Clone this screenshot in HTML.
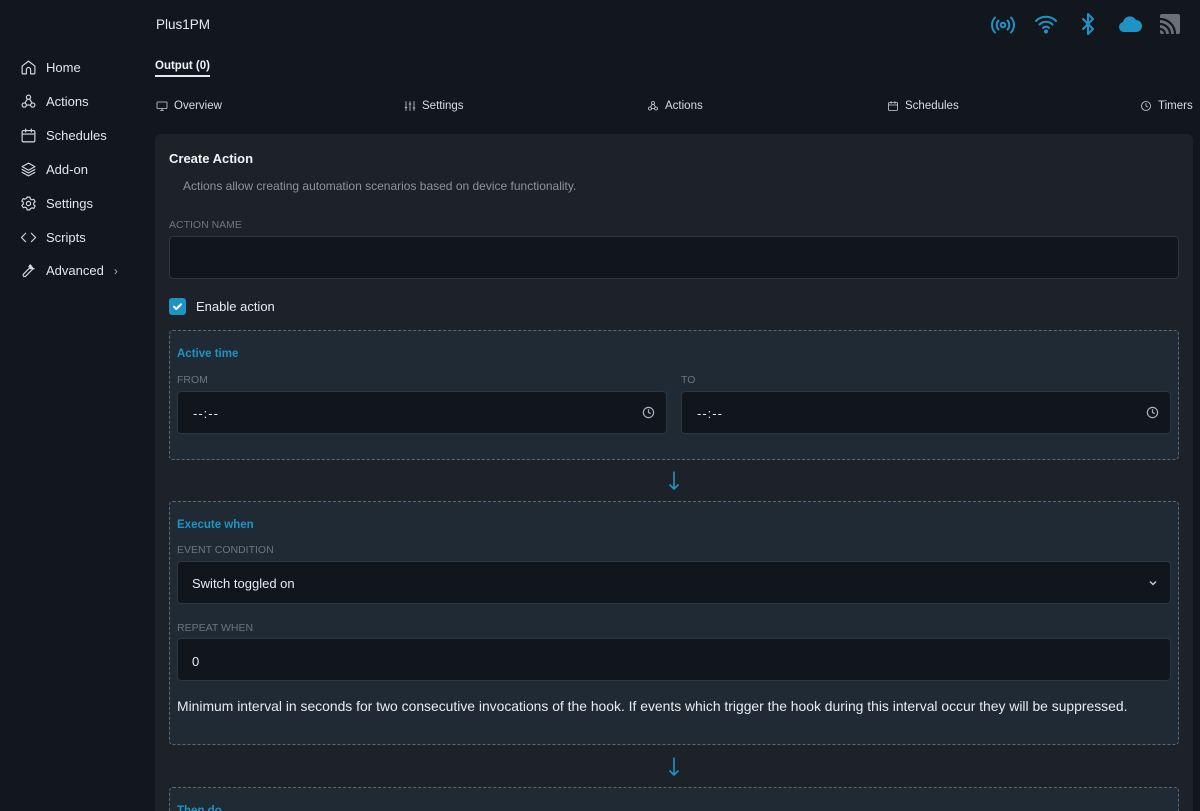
<!DOCTYPE html>
<html><head><meta charset="utf-8"><style>
*{box-sizing:border-box;margin:0;padding:0}
html{width:1200px;height:811px;overflow:hidden}
body{width:1200px;height:811px;overflow:hidden;background:#12171e;font-family:"Liberation Sans",sans-serif;color:#e6e9ec;position:relative}
.a{position:absolute}
.nav{left:20px;font-size:13px;color:#e3e6ea;display:flex;align-items:center}
.nav svg{width:17px;height:17px;margin-right:9px;fill:none;stroke:#d6dadf;stroke-width:1.6;stroke-linecap:round;stroke-linejoin:round}
.tab{font-size:11.5px;color:#d8dce0;display:flex;align-items:center;top:100px}
.tab svg{width:12px;height:12px;margin-right:6px;fill:none;stroke:#cfd3d8;stroke-width:1.6;stroke-linecap:round;stroke-linejoin:round}
.card{left:155px;top:134px;width:1038px;height:677px;background:#1d2229;border-radius:6px 6px 0 0}
.lbl{font-size:10.5px;color:#6c757e;text-transform:uppercase}
.inp{background:#11161c;border:1px solid #2c3640;border-radius:4px}
.panel{background:#1f2a35;border:1px dashed #5c6873;border-radius:4px;left:169px;width:1010px}
.ph{font-size:11.5px;font-weight:bold;color:#1e93c6}
.txt{font-size:13px;color:#e8ebee}
.clk{width:13px;height:13px;fill:none;stroke:#aab1b8;stroke-width:1.5}
.arrow{left:668px}
</style></head><body>
<div class="a" style="left:156px;top:17px;font-size:13.5px;color:#e8ebee">Plus1PM</div>
<div class="a" style="left:155px;top:60px;font-size:11.5px;font-weight:bold;color:#f0f2f4">Output (0)</div>
<div class="a" style="left:155px;top:75px;width:55px;height:1.5px;background:#e6e9ec"></div>

<svg class="a" style="left:990px;top:14px" width="26" height="22" viewBox="0 0 26 22" fill="none" stroke="#1e93c6" stroke-width="2" stroke-linecap="round"><circle cx="13" cy="11" r="2.3"/><path d="M8.5 6.5a6.5 6.5 0 0 0 0 9M17.5 6.5a6.5 6.5 0 0 1 0 9M5 3.5a11 11 0 0 0 0 15M21 3.5a11 11 0 0 1 0 15"/></svg>
<svg class="a" style="left:1034px;top:14px" width="24" height="20" viewBox="0 0 24 20" fill="none" stroke="#1e93c6" stroke-width="2" stroke-linecap="round"><path d="M2 7a14 14 0 0 1 20 0M5.5 10.5a9 9 0 0 1 13 0M9 14a4 4 0 0 1 6 0"/><circle cx="12" cy="17.5" r="1" fill="#1e93c6"/></svg>
<svg class="a" style="left:1080px;top:12px" width="16" height="24" viewBox="0 0 16 24" fill="none" stroke="#1e93c6" stroke-width="2" stroke-linejoin="round" stroke-linecap="round"><path d="M3 7l10 10-5 5V2l5 5L3 17"/></svg>
<svg class="a" style="left:1117px;top:14px" width="26" height="20" viewBox="0 0 26 20"><path fill="#1e93c6" d="M7 18a5 5 0 0 1-1-9.9A7 7 0 0 1 19 6a5.5 5.5 0 0 1 0 12z"/></svg>
<svg class="a" style="left:1159px;top:13px" width="22" height="22" viewBox="0 0 22 22" fill="#6b7077"><rect x="1" y="1" width="20" height="20" rx="2"/><g fill="none" stroke="#12171e" stroke-width="2.2"><path d="M1 6a15 15 0 0 1 15 15M1 11a10 10 0 0 1 10 10M1 16a5 5 0 0 1 5 5"/></g></svg>

<div class="a nav" style="top:59px"><svg viewBox="0 0 24 24"><path d="M3 10l9-7 9 7v10a1 1 0 0 1-1 1h-5v-6a3 3 0 0 0-6 0v6H4a1 1 0 0 1-1-1z"/></svg>Home</div>
<div class="a nav" style="top:93px"><svg viewBox="0 0 24 24"><circle cx="12" cy="6" r="3"/><circle cx="6" cy="17" r="3"/><circle cx="18" cy="17" r="3"/><path d="M10.5 8.5L7 14M13.5 8.5L17 14M9 17h6"/></svg>Actions</div>
<div class="a nav" style="top:127px"><svg viewBox="0 0 24 24"><rect x="3" y="5" width="18" height="16" rx="2"/><path d="M3 10h18M8 3v4M16 3v4"/></svg>Schedules</div>
<div class="a nav" style="top:161px"><svg viewBox="0 0 24 24"><path d="M12 3l9 5-9 5-9-5zM3 12l9 5 9-5M3 16l9 5 9-5"/></svg>Add-on</div>
<div class="a nav" style="top:195px"><svg viewBox="0 0 24 24"><circle cx="12" cy="12" r="3"/><path d="M10 3h4l.6 2.6 2.3 1.3 2.5-.9 2 3.5-2 1.7v2.6l2 1.7-2 3.5-2.5-.9-2.3 1.3L14 21h-4l-.6-2.6-2.3-1.3-2.5.9-2-3.5 2-1.7v-2.6l-2-1.7 2-3.5 2.5.9 2.3-1.3z"/></svg>Settings</div>
<div class="a nav" style="top:229px"><svg viewBox="0 0 24 24"><path d="M8 6l-6 6 6 6M16 6l6 6-6 6"/></svg>Scripts</div>
<div class="a nav" style="top:262px"><svg viewBox="0 0 24 24"><path d="M14.5 4a5 5 0 0 0 5.5 5.5l-2 .5-10 10a2 2 0 0 1-3-3l10-10 .5-2A5 5 0 0 1 14.5 4l-2 2.5 2.5 3 3-1z"/></svg>Advanced<span style="margin-left:10px;color:#aab1b8;font-size:12px">&#8250;</span></div>

<div class="a tab" style="left:156px"><svg viewBox="0 0 24 24"><rect x="2" y="4" width="20" height="13" rx="1"/><path d="M9 21h6M12 17v4"/></svg>Overview</div>
<div class="a tab" style="left:404px"><svg viewBox="0 0 24 24"><path d="M4 3v18M12 3v18M20 3v18M2 15h4M10 8h4M18 16h4"/></svg>Settings</div>
<div class="a tab" style="left:647px"><svg viewBox="0 0 24 24"><circle cx="12" cy="6" r="3"/><circle cx="6" cy="17" r="3"/><circle cx="18" cy="17" r="3"/><path d="M10.5 8.5L7 14M13.5 8.5L17 14M9 17h6"/></svg>Actions</div>
<div class="a tab" style="left:887px"><svg viewBox="0 0 24 24"><rect x="3" y="5" width="18" height="16" rx="2"/><path d="M3 10h18M8 3v4M16 3v4"/></svg>Schedules</div>
<div class="a tab" style="left:1140px"><svg viewBox="0 0 24 24"><circle cx="12" cy="12" r="9"/><path d="M12 7v5l3 2"/></svg>Timers</div>

<div class="a card"></div>
<div class="a" style="left:169px;top:151px;font-size:13px;font-weight:bold;color:#f0f2f4">Create Action</div>
<div class="a" style="left:183px;top:179px;font-size:12px;color:#8a939c">Actions allow creating automation scenarios based on device functionality.</div>
<div class="a lbl" style="left:169px;top:219px">Action name</div>
<div class="a inp" style="left:169px;top:236px;width:1010px;height:43px"></div>
<div class="a" style="left:169px;top:298px;width:17px;height:17px;background:#1e93c6;border-radius:3px"><svg width="17" height="17" viewBox="0 0 17 17" fill="none" stroke="#fff" stroke-width="2" stroke-linecap="round" stroke-linejoin="round"><path d="M5 8.7l2.3 2.3L12 6.3"/></svg></div>
<div class="a txt" style="left:196px;top:299px">Enable action</div>

<div class="a panel" style="top:330px;height:130px"></div>
<div class="a ph" style="left:177px;top:348px">Active time</div>
<div class="a lbl" style="left:177px;top:374px">From</div>
<div class="a lbl" style="left:681px;top:374px">To</div>
<div class="a inp" style="left:177px;top:391px;width:490px;height:43px"></div>
<div class="a inp" style="left:681px;top:391px;width:490px;height:43px"></div>
<div class="a txt" style="left:193px;top:406px;letter-spacing:1px">--:--</div>
<div class="a txt" style="left:697px;top:406px;letter-spacing:1px">--:--</div>
<svg class="a clk" style="left:642px;top:406px" viewBox="0 0 24 24"><circle cx="12" cy="12" r="9.5" stroke-width="2.2"/><path d="M12 6v6l4 2" stroke-width="2.2"/></svg>
<svg class="a clk" style="left:1146px;top:406px" viewBox="0 0 24 24"><circle cx="12" cy="12" r="9.5" stroke-width="2.2"/><path d="M12 6v6l4 2" stroke-width="2.2"/></svg>

<svg class="a arrow" style="top:471px" width="12" height="20" viewBox="0 0 12 20" fill="none" stroke="#1e93c6" stroke-width="1.6" stroke-linecap="round"><path d="M6 1v17M2 14l4 4 4-4"/></svg>

<div class="a panel" style="top:501px;height:244px"></div>
<div class="a ph" style="left:177px;top:519px">Execute when</div>
<div class="a lbl" style="left:177px;top:544px">Event condition</div>
<div class="a inp" style="left:177px;top:561px;width:994px;height:43px"></div>
<div class="a txt" style="left:192px;top:576px">Switch toggled on</div>
<svg class="a" style="left:1148px;top:578px" width="10" height="10" viewBox="0 0 10 10" fill="none" stroke="#c0c5ca" stroke-width="1.5"><path d="M2 3.5l3 3 3-3"/></svg>
<div class="a lbl" style="left:177px;top:622px">Repeat when</div>
<div class="a inp" style="left:177px;top:638px;width:994px;height:43px"></div>
<div class="a txt" style="left:192px;top:654px">0</div>
<div class="a txt" style="left:177px;top:698px;font-size:13.9px">Minimum interval in seconds for two consecutive invocations of the hook. If events which trigger the hook during this interval occur they will be suppressed.</div>

<svg class="a arrow" style="top:757px" width="12" height="20" viewBox="0 0 12 20" fill="none" stroke="#1e93c6" stroke-width="1.6" stroke-linecap="round"><path d="M6 1v17M2 14l4 4 4-4"/></svg>

<div class="a panel" style="top:787px;height:40px"></div>
<div class="a ph" style="left:177px;top:805px">Then do</div>
</body></html>
